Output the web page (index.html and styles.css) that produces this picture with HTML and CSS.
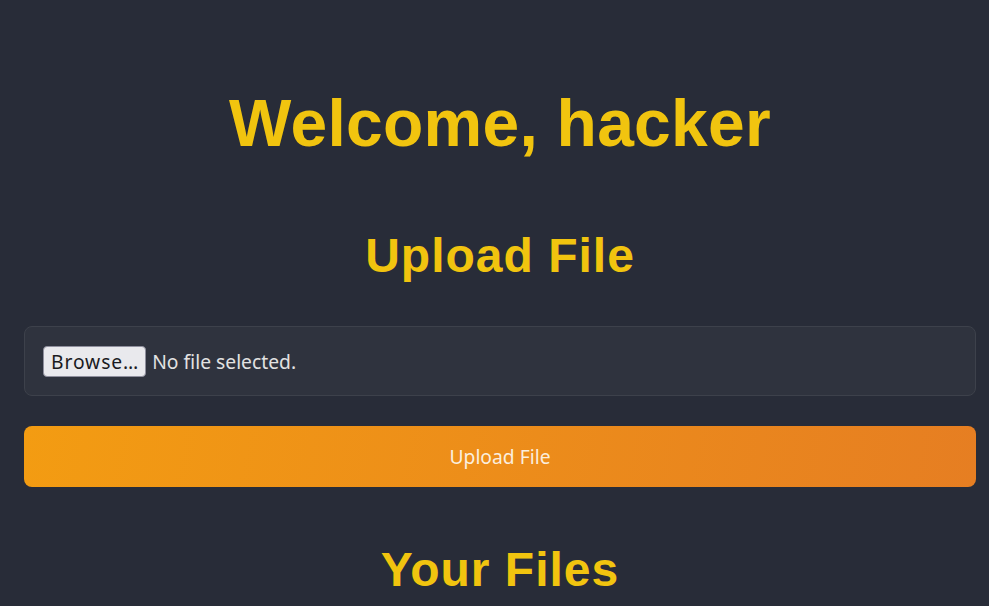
FILE: index.html
```html
<!DOCTYPE html>
<html lang="en">
<head>
<meta charset="utf-8">
<title>Dashboard</title>
<link rel="stylesheet" href="styles.css">
</head>
<body>
<main class="page">
  <h1 class="title">Welcome, hacker</h1>
  <h2 class="section-title">Upload File</h2>
  <form class="upload-form">
    <label class="file-field">
      <input class="file-input" type="file" name="file">
      <span class="browse-btn">Browse…</span>
      <span class="file-status">No file selected.</span>
    </label>
    <button class="upload-btn" type="button">Upload File</button>
  </form>
  <h2 class="section-title files-title">Your Files</h2>
</main>
</body>
</html>
```
FILE: styles.css
```css
html, body {
  margin: 0;
  padding: 0;
  background: #282c38;
  height: 100%;
  overflow: hidden;
}
body {
  font-family: "Noto Sans", "Open Sans", sans-serif;
  color: #e6e6e6;
}
.page {
  padding: 0 13px 0 24px;
  display: flex;
  flex-direction: column;
}
.title {
  margin: 84px 0 0;
  font-family: "Liberation Sans", Arial, sans-serif;
  font-weight: 700;
  font-size: 66px;
  line-height: 78px;
  color: #f1c40f;
  text-align: center;
  letter-spacing: 0.25px;
}
.section-title {
  margin: 66px 0 0;
  font-family: "Liberation Sans", Arial, sans-serif;
  font-weight: 700;
  font-size: 48px;
  line-height: 56px;
  color: #f1c40f;
  text-align: center;
  letter-spacing: 1px;
}
.upload-form {
  margin-top: 42px;
  display: flex;
  flex-direction: column;
  gap: 30px;
}
.file-field {
  display: flex;
  align-items: center;
  gap: 6px;
  height: 68px;
  padding: 0 18px;
  background: #2f333e;
  border: 1px solid #3d414b;
  border-radius: 8px;
}
.file-input {
  display: none;
}
.browse-btn {
  display: inline-flex;
  align-items: center;
  height: 29px;
  padding: 0 6px 0 7px;
  background: #e9e9ed;
  color: #1b1b1f;
  border: 1px solid #8f8f9d;
  border-radius: 4px;
  font-size: 19.3px;
  letter-spacing: 0.9px;
}
.file-status {
  font-size: 19.3px;
  color: #e2e2e2;
}
.upload-btn {
  height: 61px;
  border: none;
  border-radius: 8px;
  background: linear-gradient(100deg, #f39c12 0%, #e67e22 100%);
  color: #fbeede;
  font-family: "Noto Sans", "Open Sans", sans-serif;
  font-size: 19.3px;
}
.files-title {
  margin-top: 55px;
}
```
